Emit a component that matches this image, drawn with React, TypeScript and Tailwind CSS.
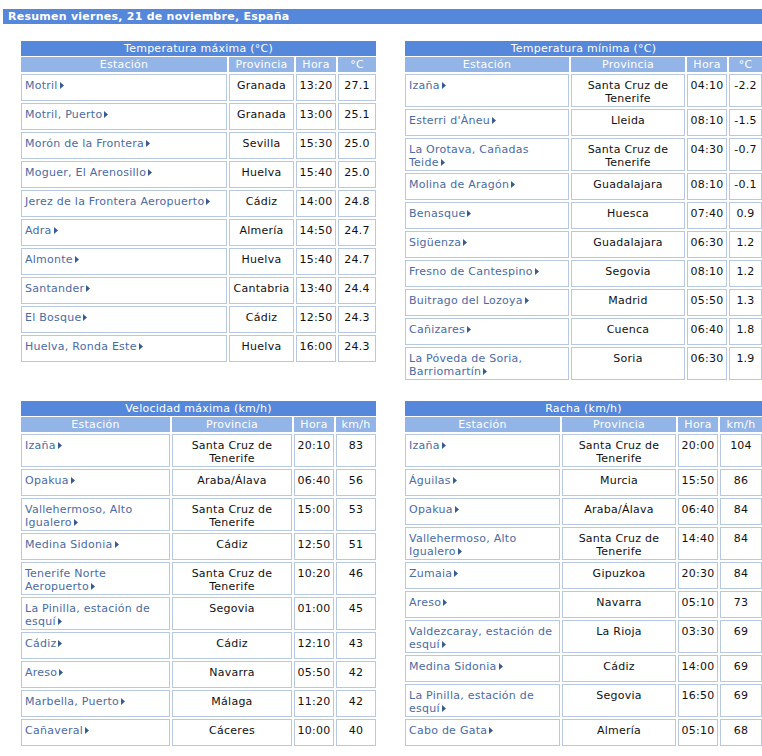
import React from "react";

type Row = { st: string[]; prov: string[]; hora: string; val: string };

const Arrow = () => (
  <svg width="4" height="7" viewBox="0 0 4 7" className="inline-block ml-[2px] align-[0px]">
    <polygon points="0,0 4,3.5 0,7" fill="#3a5a92" />
  </svg>
);

function Table({
  title,
  unit,
  cols,
  rows,
}: {
  title: string;
  unit: string;
  cols: string;
  rows: Row[];
}) {
  const cell = "border border-[#b7c8e2] min-h-[27px] pt-[4px] pb-[1px] leading-[13px]";
  const head = "bg-[#92b4e6] text-white text-center h-[15px] leading-[15px]";
  return (
    <div className="flex flex-col">
      <div className="bg-[#5587da] text-white text-center h-[15px] leading-[15px] mb-[1px]">{title}</div>
      <div className={`grid ${cols} gap-[2px]`}>
        <div className={head}>Estación</div>
        <div className={head}>Provincia</div>
        <div className={head}>Hora</div>
        <div className={head}>{unit}</div>
        {rows.map((r, i) => (
          <React.Fragment key={i}>
            <div className={`${cell} pl-[3px] text-[#4a6ba3]`}>
              {r.st.map((l, j) => (
                <div key={j} className="whitespace-nowrap">
                  {l}
                  {j === r.st.length - 1 && <Arrow />}
                </div>
              ))}
            </div>
            <div className={`${cell} text-center text-[#111]`}>
              {r.prov.map((l, j) => (
                <div key={j} className="whitespace-nowrap">{l}</div>
              ))}
            </div>
            <div className={`${cell} text-center text-[#111]`}>{r.hora}</div>
            <div className={`${cell} text-center text-[#111]`}>{r.val}</div>
          </React.Fragment>
        ))}
      </div>
    </div>
  );
}

const SC = ["Santa Cruz de", "Tenerife"];

const t1: Row[] = [
  { st: ["Motril"], prov: ["Granada"], hora: "13:20", val: "27.1" },
  { st: ["Motril, Puerto"], prov: ["Granada"], hora: "13:00", val: "25.1" },
  { st: ["Morón de la Frontera"], prov: ["Sevilla"], hora: "15:30", val: "25.0" },
  { st: ["Moguer, El Arenosillo"], prov: ["Huelva"], hora: "15:40", val: "25.0" },
  { st: ["Jerez de la Frontera Aeropuerto"], prov: ["Cádiz"], hora: "14:00", val: "24.8" },
  { st: ["Adra"], prov: ["Almería"], hora: "14:50", val: "24.7" },
  { st: ["Almonte"], prov: ["Huelva"], hora: "15:40", val: "24.7" },
  { st: ["Santander"], prov: ["Cantabria"], hora: "13:40", val: "24.4" },
  { st: ["El Bosque"], prov: ["Cádiz"], hora: "12:50", val: "24.3" },
  { st: ["Huelva, Ronda Este"], prov: ["Huelva"], hora: "16:00", val: "24.3" },
];

const t2: Row[] = [
  { st: ["Izaña"], prov: SC, hora: "04:10", val: "-2.2" },
  { st: ["Esterri d'Àneu"], prov: ["Lleida"], hora: "08:10", val: "-1.5" },
  { st: ["La Orotava, Cañadas", "Teide"], prov: SC, hora: "04:30", val: "-0.7" },
  { st: ["Molina de Aragón"], prov: ["Guadalajara"], hora: "08:10", val: "-0.1" },
  { st: ["Benasque"], prov: ["Huesca"], hora: "07:40", val: "0.9" },
  { st: ["Sigüenza"], prov: ["Guadalajara"], hora: "06:30", val: "1.2" },
  { st: ["Fresno de Cantespino"], prov: ["Segovia"], hora: "08:10", val: "1.2" },
  { st: ["Buitrago del Lozoya"], prov: ["Madrid"], hora: "05:50", val: "1.3" },
  { st: ["Cañizares"], prov: ["Cuenca"], hora: "06:40", val: "1.8" },
  { st: ["La Póveda de Soria,", "Barriomartín"], prov: ["Soria"], hora: "06:30", val: "1.9" },
];

const t3: Row[] = [
  { st: ["Izaña"], prov: SC, hora: "20:10", val: "83" },
  { st: ["Opakua"], prov: ["Araba/Álava"], hora: "06:40", val: "56" },
  { st: ["Vallehermoso, Alto", "Igualero"], prov: SC, hora: "15:00", val: "53" },
  { st: ["Medina Sidonia"], prov: ["Cádiz"], hora: "12:50", val: "51" },
  { st: ["Tenerife Norte", "Aeropuerto"], prov: SC, hora: "10:20", val: "46" },
  { st: ["La Pinilla, estación de", "esquí"], prov: ["Segovia"], hora: "01:00", val: "45" },
  { st: ["Cádiz"], prov: ["Cádiz"], hora: "12:10", val: "43" },
  { st: ["Areso"], prov: ["Navarra"], hora: "05:50", val: "42" },
  { st: ["Marbella, Puerto"], prov: ["Málaga"], hora: "11:20", val: "42" },
  { st: ["Cañaveral"], prov: ["Cáceres"], hora: "10:00", val: "40" },
];

const t4: Row[] = [
  { st: ["Izaña"], prov: SC, hora: "20:00", val: "104" },
  { st: ["Águilas"], prov: ["Murcia"], hora: "15:50", val: "86" },
  { st: ["Opakua"], prov: ["Araba/Álava"], hora: "06:40", val: "84" },
  { st: ["Vallehermoso, Alto", "Igualero"], prov: SC, hora: "14:40", val: "84" },
  { st: ["Zumaia"], prov: ["Gipuzkoa"], hora: "20:30", val: "84" },
  { st: ["Areso"], prov: ["Navarra"], hora: "05:10", val: "73" },
  { st: ["Valdezcaray, estación de", "esquí"], prov: ["La Rioja"], hora: "03:30", val: "69" },
  { st: ["Medina Sidonia"], prov: ["Cádiz"], hora: "14:00", val: "69" },
  { st: ["La Pinilla, estación de", "esquí"], prov: ["Segovia"], hora: "16:50", val: "69" },
  { st: ["Cabo de Gata"], prov: ["Almería"], hora: "05:10", val: "68" },
];

export default function App() {
  return (
    <div
      className="w-[762px] h-[756px] bg-white text-[11px] tracking-[0.25px] pt-[9px] overflow-hidden"
      style={{ fontFamily: '"DejaVu Sans", Verdana, sans-serif' }}
    >
      <div className="ml-[3px] bg-[#5587da] text-white font-bold h-[15px] leading-[15px] pl-[5px]">
        Resumen viernes, 21 de noviembre, España
      </div>
      <div className="grid grid-cols-[355px_357px] gap-x-[29px] gap-y-[21px] pl-[21px] pt-[17px] items-start">
        <Table title="Temperatura máxima (°C)" unit="°C" cols="grid-cols-[206px_65px_40px_38px]" rows={t1} />
        <Table title="Temperatura mínima (°C)" unit="°C" cols="grid-cols-[164px_114px_40px_33px]" rows={t2} />
        <Table title="Velocidad máxima (km/h)" unit="km/h" cols="grid-cols-[149px_120px_40px_40px]" rows={t3} />
        <Table title="Racha (km/h)" unit="km/h" cols="grid-cols-[155px_114px_40px_42px]" rows={t4} />
      </div>
    </div>
  );
}
